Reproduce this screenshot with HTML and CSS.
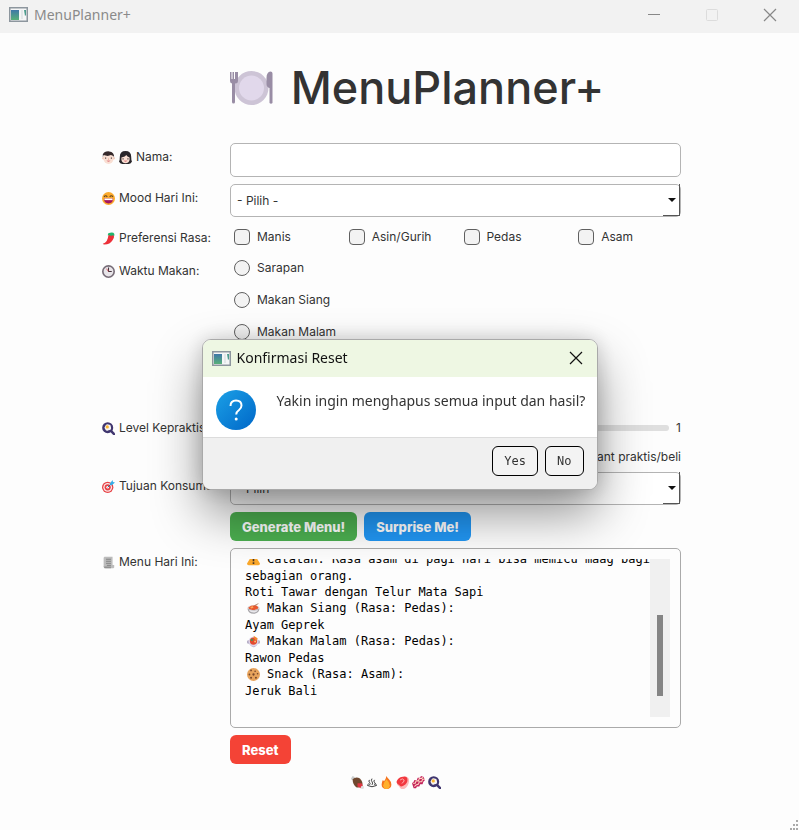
FILE: index.html
```html
<!DOCTYPE html>
<html lang="id">
<head>
<meta charset="utf-8">
<meta name="viewport" content="width=device-width, initial-scale=1">
<title>MenuPlanner+</title>
<link rel="stylesheet" href="styles.css">
</head>
<body>
<svg class="sprite" aria-hidden="true">
  <defs>
    <linearGradient id="app-grad" x1="0" y1="0" x2="0" y2="1"><stop offset="0" stop-color="#3f78a8"/><stop offset="1" stop-color="#58b078"/></linearGradient>
    <linearGradient id="ask-grad" x1="0" y1="0" x2="1" y2="1"><stop offset="0" stop-color="#1ba0e6"/><stop offset="1" stop-color="#0067c8"/></linearGradient>
  </defs>
  <symbol id="app" viewBox="0 0 19 15"><rect x=".75" y=".75" width="17.5" height="13.5" fill="#f5f6f7" stroke="#8d969e" stroke-width="1.5"/><rect x="2" y="3" width="8" height="10" fill="url(#app-grad)"/><path d="M12 3h2v9h-2z" fill="#e3e7e9"/><path d="M15 3h2v5l-1 1z" fill="#4d9d8e"/></symbol>
  <symbol id="plate" viewBox="0 0 44 36"><circle cx="22.500" cy="18" r="17" fill="#cdc4d6"/><circle cx="22.500" cy="18" r="12.500" fill="#e1d8eb"/><path d="M1 2h1.500v7h1V2H5v7h1V2h1.500v9q0 2-1.500 2.500V32q0 1.500-1.500 1.500T3 32V13.500Q1 13 1 11zM7.500 2H9v9q0 2-2 2.500H6V11h1.500zM43.500 33q-1.500 1.500-3 0V18q-3-1-3-4V8q0-6 4-6.500 2 0 2 2z" fill="#998da5"/></symbol>
  <symbol id="boy" viewBox="0 0 16 16"><circle cx="1.800" cy="9" r="1.500" fill="#f2c8b8"/><circle cx="14.200" cy="9" r="1.500" fill="#f2c8b8"/><rect x="2" y="2" width="12" height="14" rx="6" fill="#f9dfd3"/><path d="M1 8V4q2-4 8-3.500Q15 1 15 8l-1-2-3-1-4 1-5-1z" fill="#35292b"/><path d="M4.500 8v1.500M11.500 8v1.500" stroke="#35292b" stroke-width="1.200"/><path d="M8 9v2" stroke="#e6a995"/><path d="M5.500 12q2.500 2 5 0z" fill="#cc3648"/></symbol>
  <symbol id="girl" viewBox="0 0 16 16"><path d="M0 13q1-1 1-6Q1 0 8 0t7 7q0 5 1 6-1 3-4 3H4q-3 0-4-3" fill="#29262a"/><path d="M3 8q5-1 6-3 1 2 4 3v3q-1 4-5 4t-5-4z" fill="#f9dfd3"/><path d="M5 9v1.500M11 9v1.500" stroke="#35292b" stroke-width="1.300"/><path d="M5.500 12q2.500 2 5 0z" fill="#cc3648"/></symbol>
  <symbol id="laugh" viewBox="0 0 16 16"><circle cx="8" cy="8" r="8" fill="#fbaa2d"/><path d="M2.500 6q2-3 4 0M9.500 6q2-3 4 0" fill="none" stroke="#61451e" stroke-width="1.300"/><path d="M2.500 8h11q0 6-5.500 6t-5.500-6" fill="#a3155f"/><path d="M3 8h10v2H3z" fill="#fff"/></symbol>
  <symbol id="chili" viewBox="0 0 16 16"><path d="M8 3h6q2 3-1 7-3 5-10 5.500-2 0-2-1 6-1 7-11" fill="#ed3039"/><path d="M7 4q0-3 3-3 2-1 4 0 2 1 1 4l-2-1-2 1-1-1z" fill="#22b66e"/></symbol>
  <symbol id="clock" viewBox="0 0 16 16"><circle cx="8" cy="8" r="7" fill="#e8e5e9" stroke="#776d78" stroke-width="2"/><path d="M8 3v5h4" fill="none" stroke="#44353f" stroke-width="1.300"/><path d="M8 8L5.500 4.500" stroke="#dd4a50"/></symbol>
  <symbol id="pan" viewBox="0 0 16 16"><path d="M11 11l4 4" stroke="#40366f" stroke-width="3" stroke-linecap="round"/><circle cx="7" cy="7" r="6.800" fill="#40366f"/><path d="M4 5q1-3 4-2 3 0 3 3 1 4-3 4-3 2-4-1-2-2 0-4" fill="#f4f2f4"/><circle cx="6.500" cy="6" r="2" fill="#fcb630"/></symbol>
  <symbol id="target" viewBox="0 0 16 16"><circle cx="7" cy="9" r="7" fill="#e74246"/><circle cx="7" cy="9" r="5.400" fill="#fbe9e9"/><circle cx="7" cy="9" r="3.800" fill="#e74246"/><circle cx="7" cy="9" r="1.600" fill="#fff"/><path d="M7 9l5-5" stroke="#256f9c" stroke-width="1.200"/><path d="M10 4l3-4 .5 2.500L16 3l-4 3.500-2-.5z" fill="#36aee9"/></symbol>
  <symbol id="receipt" viewBox="0 0 16 16"><path d="M3 1h10v10h2v3l-1 1H4l-1-2-1 1V2z" fill="#bcbcbc"/><path d="M5 4h6M5 6.500h6M5 9h6M6 11.500h5" stroke="#777"/><path d="M2 13h9v2H3z" fill="#929292"/></symbol>
  <symbol id="warn" viewBox="0 0 16 16"><path d="M8 1q1 0 2 2l6 10q0 2-2 2H2q-2 0-2-2L6 3q1-2 2-2" fill="#fba92c"/><path d="M8 5v5M8 11.500v2" stroke="#493526" stroke-width="2"/></symbol>
  <symbol id="bowl" viewBox="0 0 16 16"><ellipse cx="8" cy="7.500" rx="7.500" ry="3.500" fill="#d9d4d8"/><path d="M1.500 7l3.500-2.500 6-.5 3 2.500-1 2-5 1.500-5-1z" fill="#e8582f"/><path d="M4 6l3-1 1 2-3 1z" fill="#f9a55b"/><path d="M9 4.500L14 2" stroke="#a87658"/><path d="M.5 8q7.500 4 15 0-1 6.500-7.500 6.500T.5 8" fill="#a9a7ab"/><path d="M2 9.500q6 2 12 0-2 3.500-6 3.500T2 9.500" fill="#e9e8ec"/></symbol>
  <symbol id="stew" viewBox="0 0 16 16"><path d="M0 7l3-1h10l3 1v3l-3 1q-2 4-5 4t-5-4l-3-1z" fill="#b7afc7"/><circle cx="8" cy="8" r="6" fill="#ddd5ea"/><circle cx="8" cy="7.500" r="4.500" fill="#e3492e"/><path d="M8 1l5 3-1 3-3-2z" fill="#f28a31"/><circle cx="6" cy="6" r="1.300" fill="#3c9c53"/><circle cx="10" cy="8" r="1.200" fill="#fac26c"/></symbol>
  <symbol id="cookie" viewBox="0 0 16 16"><circle cx="8" cy="8" r="8" fill="#e7a35c"/><g fill="#74462b"><circle cx="5" cy="3" r="1.100"/><circle cx="10" cy="4" r="1"/><circle cx="3" cy="8" r="1.100"/><circle cx="8" cy="8" r="1.400"/><circle cx="13" cy="7" r="1"/><circle cx="5" cy="12" r="1.200"/><circle cx="11" cy="12" r="1.200"/></g></symbol>
  <symbol id="drumstick" viewBox="0 0 16 16"><path d="M0 3l2-3 2 1 2 3-2 2-3-1z" fill="#c9cccc"/><path d="M2 4q4-4 9-1 4 4 3 9-3 3-7 2-5-3-5-10" fill="#70482f"/><path d="M8 9l5 0 2 4-3 2-4-2z" fill="#df3642"/><circle cx="14" cy="14" r="2" fill="#ddd"/></symbol>
  <symbol id="springs" viewBox="0 0 16 16"><path d="M4 3q-2 2 0 4t0 4M8 1q-2 3 0 5t0 5M12 3q-2 2 0 4t0 4M3 9q-3 2-2 3 7 4 14 0 1-1-2-3" fill="none" stroke="#222" stroke-width="1.400"/></symbol>
  <symbol id="fire" viewBox="0 0 16 16"><path d="M8 0q1 2 3 4 3 3 3 6.500Q14 16 8 16t-6-5.500Q2 8 3.500 5L5 6.500Q7.500 3 8 0" fill="#f5741f"/><path d="M8 4q4 4 4 7.500Q12 16 8 16t-4-4.500Q4 8 8 4" fill="#ffb02e"/></symbol>
  <symbol id="meat" viewBox="0 0 16 16"><path d="M1 6q3-5 8-5l4 0q4 2 3 6-1 6-6 9-5 1-6-3-4-3-3-7" fill="#fcb9b8"/><path d="M1 6q3-5 8-5 4-1 5 2 1 6-5 9-4 2-5-1-4-2-3-5" fill="#f2383f"/><path d="M5 5q3-3 5 0 0 3-3 4" fill="none" stroke="#ffc3c3"/></symbol>
  <symbol id="bacon" viewBox="0 0 16 16"><path d="M0 9l2-2 1-2 3 0 1-3 3 0 1-2 3 1 2 4-2 2-1 3-3 0-1 3-3 0-1 2-3 0z" fill="#c3225b"/><path d="M1 9l3 0 1-3 3 0 1-3 3 0 1-2M3 13l2-2 3-1 1-3 3 0 1-3 3 0" stroke="#ffd6c2" stroke-width="1.300" fill="none"/></symbol>
</svg>

<header class="titlebar">
  <svg class="app-icon"><use href="#app"/></svg>
  <span class="titlebar-name">MenuPlanner+</span>
  <div class="window-controls">
    <button type="button" aria-label="Minimize"><svg viewBox="0 0 12 12"><path d="M0 5.500h12" stroke="#888"/></svg></button>
    <button type="button" aria-label="Maximize"><svg viewBox="0 0 12 12"><rect x=".5" y=".5" width="11" height="11" rx="1" fill="none" stroke="#dcdcdc"/></svg></button>
    <button type="button" aria-label="Close"><svg viewBox="0 0 12 12"><path d="M0 0l12 12M12 0L0 12" stroke="#888" stroke-width="1.200"/></svg></button>
  </div>
</header>

<main class="page">
  <h1 class="heading"><svg class="plate"><use href="#plate"/></svg><span>MenuPlanner+</span></h1>

  <form class="planner">
    <label class="field-label" for="nama"><svg class="emoji"><use href="#boy"/></svg><svg class="emoji"><use href="#girl"/></svg>Nama:</label>
    <input class="text-input" id="nama" type="text">

    <label class="field-label" for="mood"><svg class="emoji"><use href="#laugh"/></svg>Mood Hari Ini:</label>
    <div class="select-box"><select id="mood"><option>- Pilih -</option></select></div>

    <span class="field-label" id="rasa"><svg class="emoji"><use href="#chili"/></svg>Preferensi Rasa:</span>
    <div class="checks" role="group" aria-labelledby="rasa">
      <label class="choice"><input type="checkbox">Manis</label>
      <label class="choice"><input type="checkbox">Asin/Gurih</label>
      <label class="choice"><input type="checkbox">Pedas</label>
      <label class="choice"><input type="checkbox">Asam</label>
    </div>

    <span class="field-label" id="waktu"><svg class="emoji"><use href="#clock"/></svg>Waktu Makan:</span>
    <div class="radios" role="radiogroup" aria-labelledby="waktu">
      <label class="choice"><input type="radio" name="waktu">Sarapan</label>
      <label class="choice"><input type="radio" name="waktu">Makan Siang</label>
      <label class="choice"><input type="radio" name="waktu">Makan Malam</label>
    </div>

    <label class="field-label" for="level"><svg class="emoji"><use href="#pan"/></svg>Level Kepraktisan:</label>
    <div class="slider"><input id="level" type="range" min="1" max="5" value="1"><output for="level">1</output></div>
    <p class="hint">Instant praktis/beli</p>

    <label class="field-label" for="tujuan"><svg class="emoji"><use href="#target"/></svg>Tujuan Konsumsi:</label>
    <div class="select-box"><select id="tujuan"><option>- Pilih -</option></select></div>

    <div class="actions">
      <button class="btn btn-generate" type="button">Generate Menu!</button>
      <button class="btn btn-surprise" type="button">Surprise Me!</button>
    </div>

    <span class="field-label" id="menu"><svg class="emoji"><use href="#receipt"/></svg>Menu Hari Ini:</span>
    <div class="result" role="region" aria-labelledby="menu">
      <div class="result-text">
        <p class="with-icon"><svg class="emoji"><use href="#warn"/></svg>Catatan: Rasa asam di pagi hari bisa memicu maag bagi</p>
        <p>sebagian orang.</p>
        <p>Roti Tawar dengan Telur Mata Sapi</p>
        <p class="with-icon"><svg class="emoji"><use href="#bowl"/></svg>Makan Siang (Rasa: Pedas):</p>
        <p>Ayam Geprek</p>
        <p class="with-icon"><svg class="emoji"><use href="#stew"/></svg>Makan Malam (Rasa: Pedas):</p>
        <p>Rawon Pedas</p>
        <p class="with-icon"><svg class="emoji"><use href="#cookie"/></svg>Snack (Rasa: Asam):</p>
        <p>Jeruk Bali</p>
      </div>
      <div class="scroll-track"><div class="scroll-thumb"></div></div>
    </div>

    <div class="actions"><button class="btn btn-reset" type="button">Reset</button></div>
  </form>

  <div class="strip">
    <svg class="emoji"><use href="#drumstick"/></svg><svg class="emoji emoji-small"><use href="#springs"/></svg><svg class="emoji"><use href="#fire"/></svg><svg class="emoji"><use href="#meat"/></svg><svg class="emoji"><use href="#bacon"/></svg><svg class="emoji"><use href="#pan"/></svg>
  </div>
</main>

<svg class="grip" viewBox="0 0 10 10" aria-hidden="true"><path d="M7 0h2v2H7zM4 4h2v2H4zM7 4h2v2H7zM1 8h2v2H1zM4 8h2v2H4zM7 8h2v2H7z" fill="#aaa"/></svg>

<div class="overlay">
  <section class="dialog" role="dialog" aria-modal="true" aria-labelledby="dialog-title">
    <header class="dialog-head">
      <svg class="app-icon"><use href="#app"/></svg>
      <h2 id="dialog-title">Konfirmasi Reset</h2>
      <button class="dialog-close" type="button" aria-label="Close"><svg viewBox="0 0 12 12"><path d="M0 0l12 12M12 0L0 12" stroke="#111" stroke-width="1.200"/></svg></button>
    </header>
    <div class="dialog-body">
      <svg class="ask" viewBox="0 0 40 40"><circle cx="20" cy="20" r="20" fill="url(#ask-grad)"/><path d="M14.500 16q0-5.500 5.500-5.500t5.500 5q0 2.500-2.500 4.500-2.800 2-2.800 4.500" fill="none" stroke="#fff" stroke-width="2"/><circle cx="20.200" cy="29" r="1.500" fill="#fff"/></svg>
      <p>Yakin ingin menghapus semua input dan hasil?</p>
    </div>
    <footer class="dialog-foot">
      <button type="button">Yes</button>
      <button type="button">No</button>
    </footer>
  </section>
</div>
</body>
</html>
```
FILE: styles.css
```css
* { box-sizing: border-box; }
body {
  margin: 0;
  min-height: 100vh;
  background: #fdfdfd;
  color: #333;
  font: 12px/16px Inter, "Liberation Sans", sans-serif;
}
p, h1, h2 { margin: 0; }
button, input, select { font: inherit; color: inherit; }
.sprite { position: absolute; width: 0; height: 0; }
svg { flex: none; overflow: visible; }

.titlebar {
  display: flex;
  align-items: center;
  height: 33px;
  padding: 0 0 4px 9px;
  gap: 6px;
  background: #f2f2f2;
  color: #8a8a8a;
  font: 14px/20px "Noto Sans", sans-serif;
}
.app-icon { width: 19px; height: 15px; }
.window-controls { display: flex; margin-left: auto; }
.window-controls button {
  display: grid;
  place-items: center;
  width: 58px;
  height: 28px;
  padding: 0;
  border: 0;
  background: none;
}
.window-controls svg { width: 12px; height: 12px; }

.page { padding: 0 118px 0 102px; }
.heading {
  display: flex;
  align-items: center;
  justify-content: center;
  gap: 18px;
  height: 110px;
  padding-left: 50px;
  font-size: 45px;
  font-weight: 500;
  line-height: 60px;
}
.plate { width: 44px; height: 36px; }

.planner {
  display: grid;
  grid-template-columns: 120px minmax(0, 1fr);
  gap: 7px 8px;
  align-items: start;
}
.planner > :not(.field-label) { grid-column: 2; }
.field-label {
  display: flex;
  align-items: center;
  gap: 4px;
  padding-top: 6px;
  white-space: nowrap;
}
.emoji { width: 13px; height: 13px; }
.text-input {
  width: 100%;
  height: 34px;
  padding: 0 7px;
  border: 1px solid #b4b4b4;
  border-radius: 5px;
  background: #fff;
}
.select-box { position: relative; }
.select-box select {
  display: block;
  appearance: none;
  width: 100%;
  height: 33px;
  padding: 0 6px;
  border: 1px solid #b4b4b4;
  border-radius: 5px;
  background: #fff;
}
.select-box::before {
  content: "";
  position: absolute;
  right: 1px;
  bottom: 1px;
  width: 16px;
  height: 31px;
  border: solid #555;
  border-width: 0 1px 1px 0;
  pointer-events: none;
}
.select-box::after {
  content: "";
  position: absolute;
  right: 5px;
  top: 14px;
  border: 4px solid transparent;
  border-top-color: #111;
  border-bottom: 0;
  pointer-events: none;
}
.checks {
  display: grid;
  grid-template-columns: repeat(4, 1fr);
  gap: 8px;
  height: 26px;
}
.radios { display: grid; align-content: start; gap: 10px; min-height: 150px; }
.choice {
  display: flex;
  align-items: center;
  gap: 7px;
  min-height: 22px;
  padding-left: 4px;
}
.choice input {
  appearance: none;
  width: 16px;
  height: 16px;
  margin: 0;
  border: 1px solid #606060;
  border-radius: 4px;
  background: #f3f3f3;
}
.choice input[type="radio"] { border-radius: 50%; }
.slider { display: flex; align-items: center; gap: 7px; height: 28px; }
.slider input {
  appearance: none;
  flex: 1;
  min-width: 0;
  height: 6px;
  margin: 0;
  border-radius: 3px;
  background: #dfdfdf;
}
.slider input::-webkit-slider-thumb {
  appearance: none;
  width: 16px;
  height: 16px;
  border-radius: 50%;
  background: #4caf50;
}
.hint { text-align: right; }
.actions { display: flex; gap: 7px; }
.btn {
  height: 29px;
  padding: 0 12px;
  border: 0;
  border-radius: 6px;
  color: #fff;
  font-size: 13px;
  font-weight: 800;
}
.btn-generate { background: #4caf50; }
.btn-surprise { background: #2196f3; }
.btn-reset { background: #f44336; }

.result {
  display: flex;
  height: 180px;
  padding: 10px 10px 10px 14px;
  border: 1px solid #aaa;
  border-radius: 5px;
}
.result-text {
  display: flex;
  flex: 1;
  flex-direction: column;
  justify-content: flex-end;
  min-width: 0;
  overflow: hidden;
  padding-bottom: 18px;
  color: #000;
  font: 12px/16px "DejaVu Sans Mono", monospace;
  white-space: nowrap;
}
.with-icon { display: flex; align-items: center; gap: 7px; padding-left: 2px; line-height: 17px; }
.scroll-track { flex: none; width: 20px; padding: 56px 7px 21px; background: #f0f0f0; }
.scroll-thumb { height: 100%; background: #858585; }

.strip { display: flex; align-items: center; justify-content: center; gap: 3px; padding: 12px 0 12px 8px; }
.emoji-small { width: 10px; height: 10px; }
.grip { position: fixed; right: 0; bottom: 0; width: 10px; height: 10px; }

.overlay { position: fixed; inset: 0; display: grid; place-items: center; padding-bottom: 2px; }
.dialog {
  width: 396px;
  max-width: 100%;
  overflow: hidden;
  border: 1px solid #a9a9a9;
  border-radius: 9px;
  background: #fff;
  box-shadow: 0 24px 50px rgba(0, 0, 0, .42), 0 0 20px rgba(0, 0, 0, .16);
  font-family: "Noto Sans", sans-serif;
}
.dialog-head {
  display: flex;
  align-items: center;
  gap: 6px;
  height: 37px;
  padding: 0 15px 0 9px;
  background: #eef7e3;
  color: #111;
}
.dialog-head h2 { font-size: 14px; font-weight: 400; line-height: 20px; }
.dialog-close { display: grid; margin-left: auto; padding: 0; border: 0; background: none; }
.dialog-close svg { width: 12px; height: 12px; }
.dialog-body {
  display: flex;
  gap: 21px;
  height: 60px;
  padding: 13px;
  font-size: 14px;
  line-height: 22px;
  white-space: nowrap;
}
.ask { width: 40px; height: 40px; }
.dialog-foot {
  display: flex;
  justify-content: flex-end;
  gap: 7px;
  padding: 8px 13px 13px;
  border-top: 1px solid #dcdcdc;
  background: #f0f0f0;
}
.dialog-foot button {
  height: 30px;
  padding: 0 11px;
  border: 1px solid #000;
  border-radius: 6px;
  background: #f3f3f3;
  font: 12px/16px "DejaVu Sans Mono", monospace;
}
```
